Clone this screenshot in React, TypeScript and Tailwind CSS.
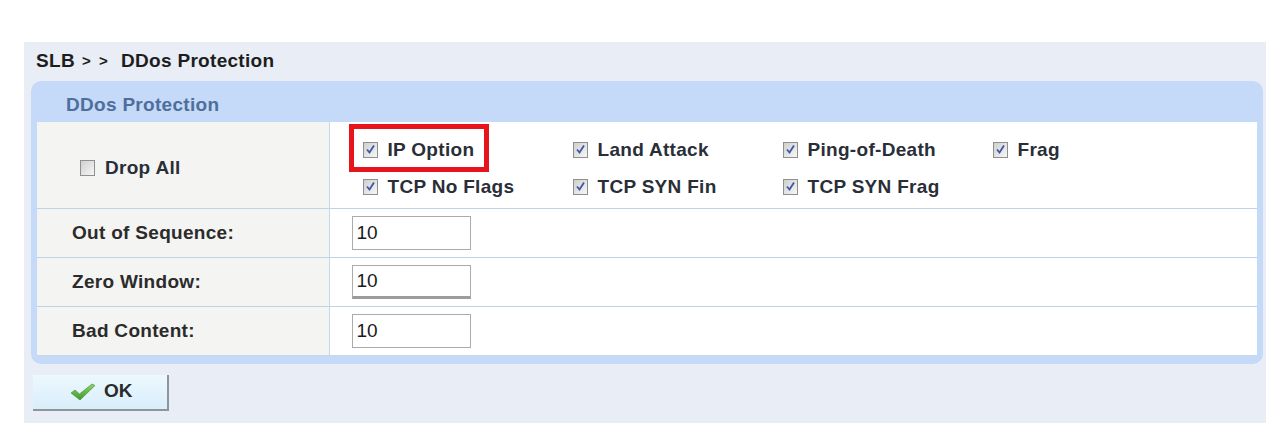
const font = { fontFamily: '"Liberation Sans", Arial, sans-serif' };

const options: Array<{ label: string; checked: boolean; highlight?: boolean }[]> = [
  [
    { label: "IP Option", checked: true, highlight: true },
    { label: "Land Attack", checked: true },
    { label: "Ping-of-Death", checked: true },
    { label: "Frag", checked: true }
  ],
  [
    { label: "TCP No Flags", checked: true },
    { label: "TCP SYN Fin", checked: true },
    { label: "TCP SYN Frag", checked: true }
  ]
];

const fields = [
  { label: "Out of Sequence:", value: "10" },
  { label: "Zero Window:", value: "10", shadow: true },
  { label: "Bad Content:", value: "10" }
];

const Box = ({ checked }: { checked: boolean }) => (
  <span className="flex h-[16px] w-[15px] shrink-0 items-center justify-center border border-[#8f8f8f] bg-gradient-to-br from-[#cfcfcf] to-[#f7f7f7]">
    {checked && (
      <svg width="11" height="11" viewBox="0 0 11 11">
        <path d="M2 5.5 L4.5 8.5 L9 1.5" fill="none" stroke="#3d56a6" strokeWidth="1.8" />
      </svg>
    )}
  </span>
);

const Check = ({ label, checked }: { label: string; checked: boolean }) => (
  <label className="flex items-center gap-[10px] text-[19px] font-bold leading-none tracking-[0.3px] text-[#2a2e38]">
    <Box checked={checked} />
    <span>{label}</span>
  </label>
);

const OkIcon = () => (
  <svg width="26" height="18" viewBox="0 0 26 18">
    <defs>
      <linearGradient id="g" x1="0" y1="0" x2="0" y2="1">
        <stop offset="0" stopColor="#8fd46a" />
        <stop offset="1" stopColor="#3d9a2c" />
      </linearGradient>
    </defs>
    <path d="M1 10 L5 7 L9.5 11 L22 1 L25 2.5 L10 17 Z" fill="url(#g)" stroke="#3a8a2a" strokeWidth="0.6" />
  </svg>
);

export default function App() {
  return (
    <div className="h-[423px] w-[1266px] bg-white pl-[24px] pt-[42px]" style={font}>
      <div className="flex h-full flex-col bg-[#e9eef6] pr-[3px]">
        <div className="flex h-[39px] items-center pl-[12px] text-[19px] font-bold tracking-[0.3px] text-[#1d1d1d]">
          <span>SLB</span>
          <span className="ml-[7px] text-[15px]">&gt;</span>
          <span className="ml-[8px] text-[15px]">&gt;</span>
          <span className="ml-[13px]">DDos Protection</span>
        </div>

        <div className="ml-[7px] rounded-[10px] bg-[#c5d9f9] px-[6px] pb-[8px]">
          <div className="flex h-[41px] items-center pl-[29px] pt-[7px] text-[19px] font-bold tracking-[0.3px] text-[#4e6e9c]">
            DDos Protection
          </div>

          <table className="w-full border-collapse border-b border-[#c9d6e4] bg-white">
            <tbody>
              <tr className="h-[86px] border-b border-[#bfd3e8]">
                <td className="w-[292px] border-r border-[#c5d7ea] bg-[#f4f4f2] pl-[43px] pt-[6px]">
                  <Check label="Drop All" checked={false} />
                </td>
                <td className="pl-[33px] align-top">
                  <div className="flex flex-col gap-[18px] pt-[18px]">
                    {options.map((row, i) => (
                      <div key={i} className="flex">
                        {row.map((o) => (
                          <div key={o.label} className="relative w-[210px] last:w-auto">
                            <Check label={o.label} checked={o.checked} />
                            {o.highlight && (
                              <div className="absolute left-[-14px] top-[-16px] h-[48px] w-[140px] border-[5px] border-[#e8141c]" />
                            )}
                          </div>
                        ))}
                      </div>
                    ))}
                  </div>
                </td>
              </tr>
              {fields.map((f) => (
                <tr key={f.label} className="h-[49px] border-b border-[#bfd3e8] last:border-b-0">
                  <td className="border-r border-[#c5d7ea] bg-[#f4f4f2] pl-[35px] pt-[1px] text-[19px] font-bold tracking-[0.3px] text-[#2b2b2b]">
                    {f.label}
                  </td>
                  <td className="pl-[22px]">
                    <input
                      readOnly
                      value={f.value}
                      className={
                        "h-[34px] w-[119px] border border-[#ababab] bg-white pl-[4px] text-[19px] text-[#1a1a1a] outline-none " +
                        (f.shadow ? "border-b-[3px] border-b-[#9c9c9c]" : "")
                      }
                      style={font}
                    />
                  </td>
                </tr>
              ))}
            </tbody>
          </table>
        </div>

        <div className="pl-[9px] pt-[11px]">
          <button className="flex h-[36px] w-[136px] items-center gap-[8px] border-r-2 border-b-2 border-[#8e9499] bg-gradient-to-b from-[#edf8fe] to-[#d8eefb] pl-[37px] text-[19px] font-bold text-[#2a2a2a]">
            <OkIcon />
            OK
          </button>
        </div>
      </div>
    </div>
  );
}
